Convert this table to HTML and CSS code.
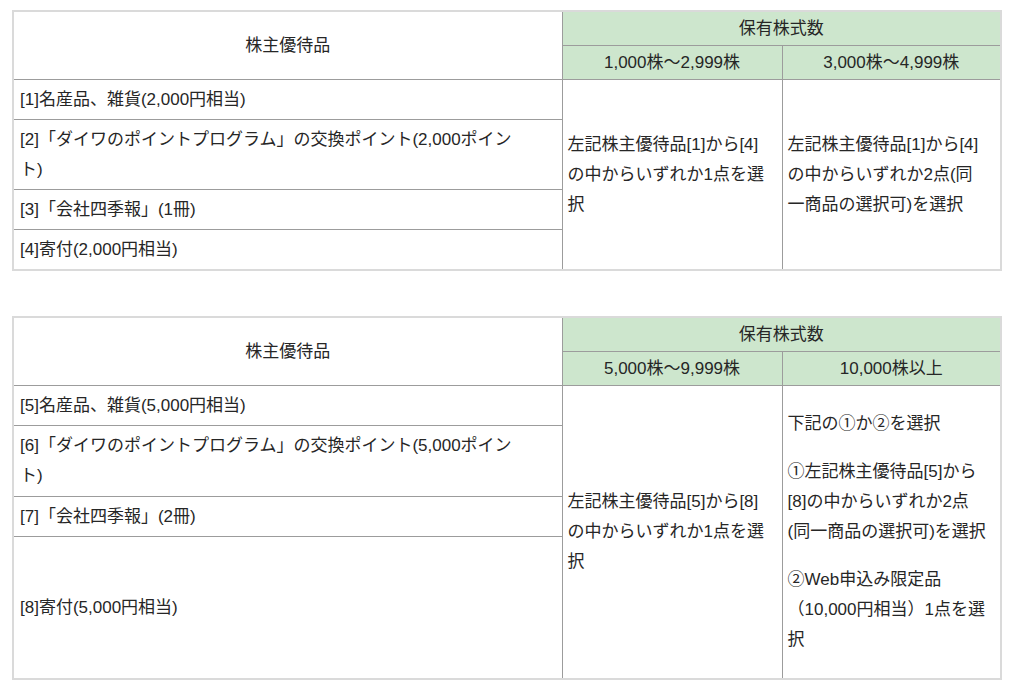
FILE: index.html
```html
<!DOCTYPE html>
<html lang="ja">
<head>
<meta charset="utf-8">
<title>株主優待</title>
<link rel="stylesheet" href="styles.css">
</head>
<body>
<div class="page">
  <table class="yutai">
    <colgroup><col class="c1"><col class="c2"><col class="c3"></colgroup>
    <thead>
      <tr>
        <th rowspan="2" class="item-head">株主優待品</th>
        <th colspan="2" class="green">保有株式数</th>
      </tr>
      <tr>
        <th class="green">1,000株～2,999株</th>
        <th class="green">3,000株～4,999株</th>
      </tr>
    </thead>
    <tbody>
      <tr>
        <td class="item">[1]名産品、雑貨(2,000円相当)</td>
        <td rowspan="4" class="choice">左記株主優待品[1]から[4]<br>の中からいずれか1点を選<br>択</td>
        <td rowspan="4" class="choice">左記株主優待品[1]から[4]<br>の中からいずれか2点(同<br>一商品の選択可)を選択</td>
      </tr>
      <tr><td class="item">[2]「ダイワのポイントプログラム」の交換ポイント(2,000ポイン<br>ト)</td></tr>
      <tr><td class="item">[3]「会社四季報」(1冊)</td></tr>
      <tr><td class="item">[4]寄付(2,000円相当)</td></tr>
    </tbody>
  </table>

  <table class="yutai">
    <colgroup><col class="c1"><col class="c2"><col class="c3"></colgroup>
    <thead>
      <tr>
        <th rowspan="2" class="item-head">株主優待品</th>
        <th colspan="2" class="green">保有株式数</th>
      </tr>
      <tr>
        <th class="green">5,000株～9,999株</th>
        <th class="green">10,000株以上</th>
      </tr>
    </thead>
    <tbody>
      <tr class="short">
        <td class="item">[5]名産品、雑貨(5,000円相当)</td>
        <td rowspan="4" class="choice">左記株主優待品[5]から[8]<br>の中からいずれか1点を選<br>択</td>
        <td rowspan="4" class="choice">
          <p>下記の①か②を選択</p>
          <p>①左記株主優待品[5]から<br>[8]の中からいずれか2点<br>(同一商品の選択可)を選択</p>
          <p>②Web申込み限定品<br>（10,000円相当）1点を選<br>択</p>
        </td>
      </tr>
      <tr class="double"><td class="item">[6]「ダイワのポイントプログラム」の交換ポイント(5,000ポイン<br>ト)</td></tr>
      <tr class="short"><td class="item">[7]「会社四季報」(2冊)</td></tr>
      <tr class="tall"><td class="item">[8]寄付(5,000円相当)</td></tr>
    </tbody>
  </table>
</div>
</body>
</html>
```

FILE: styles.css
```css
html, body {
  margin: 0;
  padding: 0;
  background: #ffffff;
}

.page {
  padding: 10px 0 0 12px;
  font-family: "Liberation Sans", "Noto Sans CJK JP", sans-serif;
  font-size: 17px;
  line-height: 30px;
  color: #262626;
}

.yutai {
  width: 988px;
  border-collapse: collapse;
  border: 2px solid #dadada;
  table-layout: fixed;
  margin: 0 0 45px 0;
}

.yutai .c1 { width: 549px; }
.yutai .c2 { width: 220px; }
.yutai .c3 { width: 219px; }

.yutai th,
.yutai td {
  border: 1px solid #9c9c9c;
  vertical-align: middle;
}

.yutai th {
  font-weight: normal;
  text-align: center;
  padding: 2px 5px 1px;
  line-height: 30px;
}

.yutai th.item-head {
  background: #ffffff;
}

.yutai th.green {
  background: #cde6cd;
}

.yutai td {
  text-align: left;
  padding: 5px 2px 4px 6px;
  white-space: nowrap;
}

.yutai td.choice {
  padding: 5px 2px 5px 5px;
}

.yutai td.choice p {
  margin: 18px 0;
}

.yutai tr.short { height: 40px; }
.yutai tr.double { height: 70px; }
.yutai tr.tall { height: 142px; }
```
